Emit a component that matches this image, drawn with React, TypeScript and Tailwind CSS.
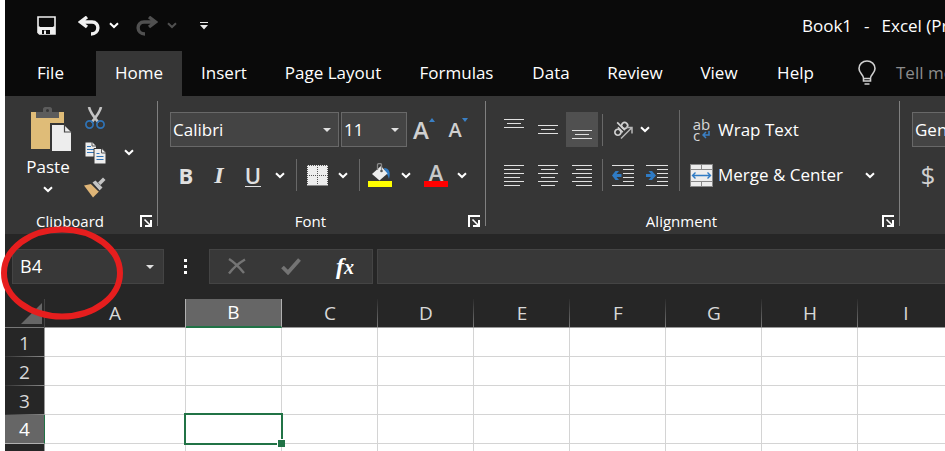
import type { ReactNode } from "react";

const tabs = [
  { label: "File", width: "w-[91px]" },
  { label: "Home", width: "w-[86px]" },
  { label: "Insert", width: "w-[84px]" },
  { label: "Page Layout", width: "w-[134px]" },
  { label: "Formulas", width: "w-[113px]" },
  { label: "Data", width: "w-[76px]" },
  { label: "Review", width: "w-[92px]" },
  { label: "View", width: "w-[76px]" },
  { label: "Help", width: "w-[77px]" },
];

const columns = ["A", "B", "C", "D", "E", "F", "G", "H", "I"];
const rows = [1, 2, 3, 4, 5];
const active = { column: "B", row: 4 };

function Chevron({ className = "text-white" }: { className?: string }) {
  return (
    <svg width="10" height="7" viewBox="0 0 10 7" fill="none" className={`shrink-0 ${className}`} aria-hidden="true">
      <path d="M1 1.2 5 5l4-3.8" stroke="currentColor" strokeWidth="2" />
    </svg>
  );
}

function Caret() {
  return (
    <svg width="8" height="4" viewBox="0 0 8 4" className="pointer-events-none col-start-1 row-start-1 mr-2 self-center justify-self-end" aria-hidden="true">
      <path d="M0 0h8L4 4z" fill="#e0e0e0" />
    </svg>
  );
}

function IconButton({
  label,
  className = "w-8",
  children,
}: {
  label: string;
  className?: string;
  children: ReactNode;
}) {
  return (
    <button type="button" aria-label={label} className={`flex h-full shrink-0 items-center justify-center ${className}`}>
      {children}
    </button>
  );
}

function Picker({ label, value, className }: { label: string; value: string; className: string }) {
  return (
    <div className={`grid h-full shrink-0 ${className}`}>
      <select
        aria-label={label}
        defaultValue={value}
        className="col-start-1 row-start-1 min-w-0 appearance-none border border-[#686868] bg-[#444] pl-0.5 text-[17px] text-white"
      >
        <option>{value}</option>
      </select>
      <Caret />
    </div>
  );
}

function Separator() {
  return <div className="h-8 w-px shrink-0 bg-[#686868]" />;
}

function GroupDivider() {
  return <div className="mt-[5px] mb-2 w-px shrink-0 bg-[#808080]" />;
}

function Group({ label, className, children }: { label: string; className: string; children: ReactNode }) {
  return (
    <section aria-label={label} className={`flex shrink-0 flex-col justify-between pb-px ${className}`}>
      {children}
      <div className="flex h-6 items-center">
        <span className="flex-1 text-center text-[15px] leading-6">{label}</span>
        <IconButton label={`${label} settings`} className="w-[22px]">
          <svg width="12" height="12" viewBox="0 0 12 12" fill="none" stroke="#fff" aria-hidden="true">
            <path d="M1 12V1h11" strokeWidth="2" />
            <path d="m4.5 4.5 6 6" strokeWidth="1.6" />
            <path d="M5 11h6V5" strokeWidth="2" />
          </svg>
        </IconButton>
      </div>
    </section>
  );
}

// Each line is [start, end, y] on a 20 x 21 grid
function Lines({ lines }: { lines: number[][] }) {
  return (
    <svg width="20" height="21" viewBox="0 0 20 21" stroke="#e0e0e0" aria-hidden="true">
      {lines.map(([x1, x2, y]) => (
        <path key={y} d={`M${x1} ${y + 0.5}H${x2}`} />
      ))}
    </svg>
  );
}

function Indent({ right = false }: { right?: boolean }) {
  return (
    <svg width="22" height="21" viewBox="0 0 22 21" fill="none" stroke="#e0e0e0" aria-hidden="true">
      <path d="M0 .5h22M11 4.5h11M11 8.5h11M11 12.5h11M11 16.5h11M0 20.5h22" />
      <path
        d={right ? "M0 9h5L2.500 6h3.500L10 10.500 6 15H2.500L5 12H0z" : "M9.500 9h-5L7 6H3.500L0 10.500 3.500 15H7l-2.500-3h5z"}
        fill="#2f7bc4"
        stroke="none"
      />
    </svg>
  );
}

function TitleBar() {
  return (
    <header className="flex h-[51px] items-center overflow-hidden bg-[#0a0a0a] pl-[27px] whitespace-nowrap">
      <IconButton label="Save" className="w-7">
        <svg width="19" height="19" viewBox="0 0 19 19" aria-hidden="true">
          <path d="M1 1h17v17H2.500L1 16.500z" fill="none" stroke="#f0f0f0" strokeWidth="1.600" />
          <path d="M1 10.500h17V18H3l-2-2z" fill="#f0f0f0" />
          <path d="M3 9v2h13V9z" fill="#0a0a0a" />
          <path d="M5 14h8v4H5z" fill="#0a0a0a" />
          <path d="M7 14.500h2V18H7z" fill="#f0f0f0" />
        </svg>
      </IconButton>
      <IconButton label="Undo" className="ml-3 w-[34px]">
        <svg width="22" height="20" viewBox="0 0 22 20" fill="none" stroke="#f0f0f0" aria-hidden="true">
          <path d="M9 1 2.500 6 9 11M3 6h11c8 0 8 12-1 12" strokeWidth="3.400" />
        </svg>
      </IconButton>
      <IconButton label="Undo history" className="w-4">
        <Chevron />
      </IconButton>
      <IconButton label="Redo" className="ml-2 w-[34px]">
        <svg width="22" height="20" viewBox="0 0 22 20" fill="none" stroke="#505050" aria-hidden="true">
          <path d="M13 1 19.500 6 13 11M19 6H8c-8 0-8 12 1 12" strokeWidth="3.400" />
        </svg>
      </IconButton>
      <IconButton label="Redo history" className="w-4">
        <Chevron className="text-[#505050]" />
      </IconButton>
      <IconButton label="Customize Quick Access Toolbar" className="ml-2 w-8">
        <svg width="8" height="8" viewBox="0 0 8 8" aria-hidden="true">
          <path d="M0 0h8v1H0zM0 3h8L4 7.500z" fill="#e8e8e8" />
        </svg>
      </IconButton>
      <h1 className="ml-[582px] flex gap-3 text-[17px]">
        <span>Book1</span>
        <span>-</span>
        <span>Excel (Product Activation Failed)</span>
      </h1>
    </header>
  );
}

function TabBar() {
  return (
    <nav className="flex h-[45px] overflow-hidden bg-[#0a0a0a] whitespace-nowrap">
      {tabs.map((tab) => (
        <button
          key={tab.label}
          type="button"
          className={`shrink-0 pb-0.5 text-[17px] ${tab.width} ${tab.label === "Home" ? "bg-[#363636]" : ""}`}
        >
          {tab.label}
        </button>
      ))}
      <button type="button" className="flex shrink-0 items-center gap-5 pb-0.5 pl-6 text-[17px] text-[#8c8c8c]">
        <svg width="18" height="25" viewBox="0 0 18 25" fill="none" stroke="#d0d0d0" strokeWidth="1.600" aria-hidden="true">
          <path d="M5.500 18.500c0-4-4.500-5-4.500-10a8 7.500 0 0 1 16 0c0 5-4.500 6-4.500 10zM5.500 18v3h7v-3M6.500 24h5" />
        </svg>
        Tell me what you want to do
      </button>
    </nav>
  );
}

function ClipboardGroup() {
  return (
    <Group label="Clipboard" className="w-[152px]">
      <div className="flex pt-1 pl-3">
        <button type="button" className="flex w-[62px] flex-col items-center pt-[7px] text-[17px] leading-7">
          <svg width="48" height="46" viewBox="0 0 48 46" aria-hidden="true">
            <path d="M7 5h33v37H7z" fill="#dfbc78" />
            <path d="M12 11V5h7V2c0-1 1-2 2-2h5c1 0 2 1 2 2v3h7v6z" fill="#5c5c5c" />
            <circle cx="23.500" cy="3.500" r="1.500" fill="#363636" />
            <path d="M26 16h15l7 7v22H26z" fill="#363636" />
            <path d="M28 18h12l7 7v19H28z" fill="#ededed" />
            <path d="M40.500 17.500V25H48" fill="none" stroke="#444" strokeWidth="1.200" />
          </svg>
          Paste
          <span className="flex h-4 items-center">
            <Chevron />
          </span>
        </button>
        <div className="flex w-8 flex-col">
          <button type="button" aria-label="Cut" className="flex h-[35px] items-center justify-center">
            <svg width="20" height="22" viewBox="0 0 20 22" fill="none" aria-hidden="true">
              <path d="M4 0c1 5 4 9 9.500 15.500M16 0c-1 5-4 9-9.500 15.500" stroke="#c4c4c4" strokeWidth="2.600" />
              <circle cx="4.500" cy="17.500" r="3.600" stroke="#2f74b8" strokeWidth="1.700" />
              <circle cx="15.500" cy="17.500" r="3.600" stroke="#2f74b8" strokeWidth="1.700" />
            </svg>
          </button>
          <button type="button" aria-label="Copy" className="flex h-[35px] items-center justify-center">
            <svg width="21" height="22" viewBox="0 0 21 22" aria-hidden="true">
              <path d="M.5.500h7l3.500 3.500v10.500H.5z" fill="#ededed" />
              <path d="M7 0v4h4" fill="none" stroke="#555" />
              <path d="M2 4.500h4M2 7.500h7M2 10.500h7" stroke="#2f74b8" strokeWidth="1.200" />
              <path d="M9 6.500h8l4 4V22H9z" fill="#ededed" stroke="#363636" />
              <path d="M16.500 7v4H21" fill="none" stroke="#555" />
              <path d="M11.500 11.500h3M11.500 14.500h7M11.500 17.500h7" stroke="#2f74b8" strokeWidth="1.200" />
            </svg>
          </button>
          <button type="button" aria-label="Format Painter" className="flex h-[35px] items-center justify-center">
            <svg width="24" height="21" viewBox="0 0 24 21" aria-hidden="true">
              <path d="m1 8.500 7-1.500 8 7.500-6 6z" fill="#dfb577" />
              <path d="m9.500 5.500 3-2 7 7-3 3z" fill="#c4c4c4" />
              <path d="m15 5.500 5-5 2.500 2.500-5 5z" fill="#c4c4c4" />
              <path d="m8.500 6.500 7.500 7.500" stroke="#363636" strokeWidth="1.200" />
            </svg>
          </button>
        </div>
        <button type="button" aria-label="Copy options" className="flex w-9 items-center justify-center">
          <Chevron />
        </button>
      </div>
    </Group>
  );
}

function FontGroup() {
  return (
    <Group label="Font" className="w-[327px]">
      <div className="flex flex-col gap-3 pt-4 pl-3">
        <div className="flex h-[35px] items-center">
          <Picker label="Font" value="Calibri" className="mr-0.5 w-[169px]" />
          <Picker label="Font size" value="11" className="w-[66px]" />
          <IconButton label="Increase font size" className="w-[34px]">
            <span className="text-2xl font-semibold text-[#d0d0d0]">A</span>
            <svg width="6" height="24" viewBox="0 0 6 24" aria-hidden="true">
              <path d="M0 4h6L3 0z" fill="#3a80c6" />
            </svg>
          </IconButton>
          <IconButton label="Decrease font size" className="w-[34px]">
            <span className="text-xl font-semibold text-[#d0d0d0]">A</span>
            <svg width="6" height="24" viewBox="0 0 6 24" aria-hidden="true">
              <path d="M0 0h6L3 4z" fill="#3a80c6" />
            </svg>
          </IconButton>
        </div>
        <div className="flex h-8 items-center text-[#e0e0e0]">
          <IconButton label="Bold">
            <span className="text-[22px] font-bold">B</span>
          </IconButton>
          <IconButton label="Italic" className="w-[34px]">
            <span className="font-['Liberation_Serif',serif] text-2xl font-bold italic">I</span>
          </IconButton>
          <IconButton label="Underline" className="w-[34px]">
            <span className="border-b border-[#e0e0e0] text-[22px] leading-[22px] font-semibold">U</span>
          </IconButton>
          <IconButton label="Underline styles" className="mr-1.5 w-5">
            <Chevron />
          </IconButton>
          <Separator />
          <IconButton label="Borders" className="ml-1 w-8">
            <svg width="21" height="21" viewBox="0 0 21 21" aria-hidden="true">
              <path d="M0 0h21v21H0z" fill="#ededed" />
              <path d="M.5 0v20M20.500 0v20M0 .500h21M10.500 0v20M0 10.500h21" stroke="#555" strokeDasharray="1 1" />
              <path d="M0 20.500h21" stroke="#888" />
            </svg>
          </IconButton>
          <IconButton label="Border styles" className="mr-1.5 w-5">
            <Chevron />
          </IconButton>
          <Separator />
          <IconButton label="Fill color" className="ml-1 w-8">
            <svg width="24" height="24" viewBox="0 0 24 24" aria-hidden="true">
              <path d="M16 5c5 0 7 4 5 11-1-4-2-5-4-6z" fill="#2f7bc4" />
              <path d="m4 11 9-8 6.500 7.500-8 7z" fill="#ededed" />
              <path d="M9.500 7V1.500c0-1.300 4-1.300 4 0V7" fill="none" stroke="#888" strokeWidth="1.300" />
              <circle cx="13.500" cy="8" r="1.300" fill="#555" />
              <path d="M0 18h24v6H0z" fill="#ff0" />
            </svg>
          </IconButton>
          <IconButton label="Fill color options" className="w-5">
            <Chevron />
          </IconButton>
          <IconButton label="Font color" className="ml-1 w-8">
            <span className="w-6 border-b-[6px] border-[#f00] text-center text-[22px] leading-[18px] font-semibold text-[#c8c8c8]">
              A
            </span>
          </IconButton>
          <IconButton label="Font color options" className="w-5">
            <Chevron />
          </IconButton>
        </div>
      </div>
    </Group>
  );
}

function AlignmentGroup() {
  return (
    <Group label="Alignment" className="w-[413px]">
      <div className="flex pt-3 pl-3">
        <div className="flex w-[181px] flex-col gap-3 pt-1">
          <div className="flex h-[35px] items-center">
            <div className="mr-1 flex h-full gap-0.5">
              <IconButton label="Top align">
                <Lines lines={[[0, 20, 0], [3, 17, 4], [0, 20, 8]]} />
              </IconButton>
              <IconButton label="Middle align">
                <Lines lines={[[0, 20, 6], [3, 17, 10], [0, 20, 14]]} />
              </IconButton>
              <IconButton label="Bottom align" className="w-8 bg-[#505050]">
                <Lines lines={[[0, 20, 11], [3, 17, 15], [0, 20, 19]]} />
              </IconButton>
            </div>
            <Separator />
            <IconButton label="Orientation" className="ml-1 w-8">
              <svg width="22" height="22" viewBox="0 0 22 22" fill="none" aria-hidden="true">
                <g transform="rotate(-45 8 9)" stroke="#d0d0d0" strokeWidth="1.700">
                  <circle cx="3.500" cy="10.500" r="3" />
                  <path d="M7 7v7M10 3v11" />
                  <circle cx="13" cy="10.500" r="3" />
                </g>
                <path d="M9 19.500 19.500 9M14 8.500h6v6" stroke="#b8b8b8" strokeWidth="1.500" />
              </svg>
            </IconButton>
            <IconButton label="Orientation options" className="w-3">
              <Chevron />
            </IconButton>
          </div>
          <div className="flex h-8 items-center">
            <div className="mr-1 flex h-full gap-0.5">
              <IconButton label="Align left">
                <Lines lines={[[0, 20, 0], [0, 16, 4], [0, 20, 8], [0, 16, 12], [0, 20, 16], [0, 16, 20]]} />
              </IconButton>
              <IconButton label="Center">
                <Lines lines={[[0, 20, 0], [3, 17, 4], [0, 20, 8], [3, 17, 12], [0, 20, 16], [3, 17, 20]]} />
              </IconButton>
              <IconButton label="Align right">
                <Lines lines={[[0, 20, 0], [4, 20, 4], [0, 20, 8], [4, 20, 12], [0, 20, 16], [4, 20, 20]]} />
              </IconButton>
            </div>
            <Separator />
            <IconButton label="Decrease indent" className="mr-0.5 ml-1 w-8">
              <Indent />
            </IconButton>
            <IconButton label="Increase indent">
              <Indent right />
            </IconButton>
          </div>
        </div>
        <div className="mt-0.5 w-px bg-[#686868]" />
        <div className="flex flex-col gap-3 pt-1 pl-2.5 text-[17px] whitespace-nowrap">
          <button type="button" className="flex h-[35px] items-center gap-[5px]">
            <span className="flex w-[23px] flex-col text-center text-[15px] leading-[11px] text-[#d8d8d8]" aria-hidden="true">
              <span>ab</span>
              <span className="flex items-center justify-center gap-0.5">
                c
                <svg width="8" height="8" viewBox="0 0 8 8" fill="none" stroke="#3a80c6" strokeWidth="1.500">
                  <path d="M7 0v4H1.500M4 1 1 4l3 3" />
                </svg>
              </span>
            </span>
            Wrap Text
          </button>
          <div className="flex h-8 items-center">
            <button type="button" className="flex w-[170px] items-center gap-[5px]">
              <svg width="23" height="23" viewBox="0 0 23 23" aria-hidden="true">
                <path d="M0 0h23v23H0z" fill="#888" />
                <path d="M1 1h10v4H1zM12 1h10v4H12zM1 6h21v11H1zM1 18h10v4H1zM12 18h10v4H12z" fill="#ededed" />
                <path d="M2.500 11.500h18M5.500 8.500l-3 3 3 3M17.500 8.500l3 3-3 3" fill="none" stroke="#2f7bc4" strokeWidth="1.400" />
              </svg>
              Merge &amp; Center
            </button>
            <IconButton label="Merge options" className="w-5">
              <Chevron />
            </IconButton>
          </div>
        </div>
      </div>
    </Group>
  );
}

function Ribbon() {
  return (
    <div className="flex min-h-[138px] overflow-hidden bg-[#363636]">
      <ClipboardGroup />
      <GroupDivider />
      <FontGroup />
      <GroupDivider />
      <AlignmentGroup />
      <GroupDivider />
      <Group label="Number" className="w-[240px]">
        <div className="flex flex-col gap-3 pt-4 pl-3">
          <div className="h-[35px]">
            <Picker label="Number format" value="General" className="w-[170px]" />
          </div>
          <div className="flex h-8">
            <IconButton label="Accounting format">
              <span className="text-[26px] text-[#d0d0d0]">$</span>
            </IconButton>
          </div>
        </div>
      </Group>
    </div>
  );
}

function FormulaBar() {
  return (
    <div className="relative flex h-[65px] items-center bg-[#262626] pl-[7px]">
      <div className="grid h-[35px] w-[152px] shrink-0">
        <input
          aria-label="Name box"
          defaultValue="B4"
          className="col-start-1 row-start-1 min-w-0 border border-[#444] bg-[#383838] px-[7px] text-[18px] text-white"
        />
        <button type="button" aria-label="Show names" className="z-0 col-start-1 row-start-1 grid w-6 justify-self-end pr-0.5">
          <Caret />
        </button>
      </div>
      <div className="mr-0.5 flex w-[43px] shrink-0 flex-col items-center gap-[3px]">
        <i className="size-[3px] bg-white" />
        <i className="size-[3px] bg-white" />
        <i className="size-[3px] bg-white" />
      </div>
      <div className="mr-1 flex h-[35px] w-[164px] shrink-0 border border-[#444] bg-[#383838]">
        <IconButton label="Cancel" className="w-[54px]">
          <svg width="18" height="17" viewBox="0 0 18 17" fill="none" stroke="#747474" strokeWidth="2.400" aria-hidden="true">
            <path d="M1 1c5 3 10 8 15 14M17 1.500C11 5 6 9 1 15.500" />
          </svg>
        </IconButton>
        <IconButton label="Enter" className="w-[54px]">
          <svg width="20" height="17" viewBox="0 0 20 17" fill="none" stroke="#747474" strokeWidth="3.800" aria-hidden="true">
            <path d="m1.500 9 5.500 5.500L18.500 1.500" />
          </svg>
        </IconButton>
        <IconButton label="Insert function" className="w-[54px]">
          <span className="font-['Liberation_Serif',serif] text-2xl leading-6 font-bold italic">
            f<span className="text-xl">x</span>
          </span>
        </IconButton>
      </div>
      <input aria-label="Formula" className="h-[35px] min-w-0 flex-1 border border-r-0 border-[#444] bg-[#383838] px-2 text-[17px]" />

      {/* Highlight ring around the name box */}
      <svg
        width="122"
        height="94"
        viewBox="0 0 122 94"
        className="pointer-events-none absolute -top-2 -left-1 z-10"
        aria-hidden="true"
      >
        <ellipse cx="61" cy="47" rx="58" ry="43.500" fill="none" stroke="#e61e1e" strokeWidth="6" />
      </svg>
    </div>
  );
}

function Sheet() {
  return (
    <div className="overflow-hidden">
      <table className="w-[949px] table-fixed border-separate border-spacing-0">
        <colgroup>
          <col className="w-10" />
          {columns.map((c) => (
            <col key={c} className={c === "A" ? "w-[141px]" : "w-24"} />
          ))}
        </colgroup>
        <thead>
          <tr className="h-[29px] bg-[#262626] text-[19px] leading-[27px]">
            <th aria-label="Select all" className="border-r border-b border-r-[#444] border-b-[#777] p-0">
              <svg width="21" height="21" viewBox="0 0 21 21" className="mr-0.5 ml-auto" aria-hidden="true">
                <path d="M21 0v21H0z" fill="#666" />
              </svg>
            </th>
            {columns.map((c) => (
              <th
                key={c}
                scope="col"
                className={`p-0 font-normal ${
                  c === active.column
                    ? "border-r border-b-2 border-r-[#b0b0b0] border-b-[#217346] bg-[#666] text-white"
                    : c === "A"
                      ? "border-r border-b border-r-[#b0b0b0] border-b-[#999] text-[#d8d8d8]"
                      : "border-b border-b-[#999] bg-[linear-gradient(#2c2c2c,#777)] bg-[length:1px_100%] bg-right bg-no-repeat text-[#d8d8d8]"
                }`}
              >
                {c}
              </th>
            ))}
          </tr>
        </thead>
        <tbody>
          {rows.map((r) => (
            <tr key={r} className="h-[29px] text-[19px] leading-7">
              <th
                scope="row"
                className={`border-r p-0 font-normal ${
                  r === active.row
                    ? "border-b border-r-[#217346] border-b-[#b0b0b0] bg-[#666] text-white"
                    : "border-r-[#999] bg-[#262626] bg-[linear-gradient(to_right,#333,#888)] bg-[length:100%_1px] bg-bottom bg-no-repeat text-[#d8d8d8]"
                }`}
              >
                {r}
              </th>
              {columns.map((c) => (
                <td key={c} className="relative border-r border-b border-[#d4d4d4] p-0">
                  {c === active.column && r === active.row && (
                    <div className="absolute -inset-0.5 z-10 border-2 border-[#217346]">
                      <div className="absolute -right-1 -bottom-1 size-2 border-t border-l border-white bg-[#217346]" />
                    </div>
                  )}
                </td>
              ))}
            </tr>
          ))}
        </tbody>
      </table>
    </div>
  );
}

export default function App() {
  return (
    <div className="h-screen overflow-hidden bg-white pl-[5px] font-['Open_Sans','Noto_Sans',sans-serif] text-white">
      <TitleBar />
      <TabBar />
      <Ribbon />
      <FormulaBar />
      <Sheet />
    </div>
  );
}
